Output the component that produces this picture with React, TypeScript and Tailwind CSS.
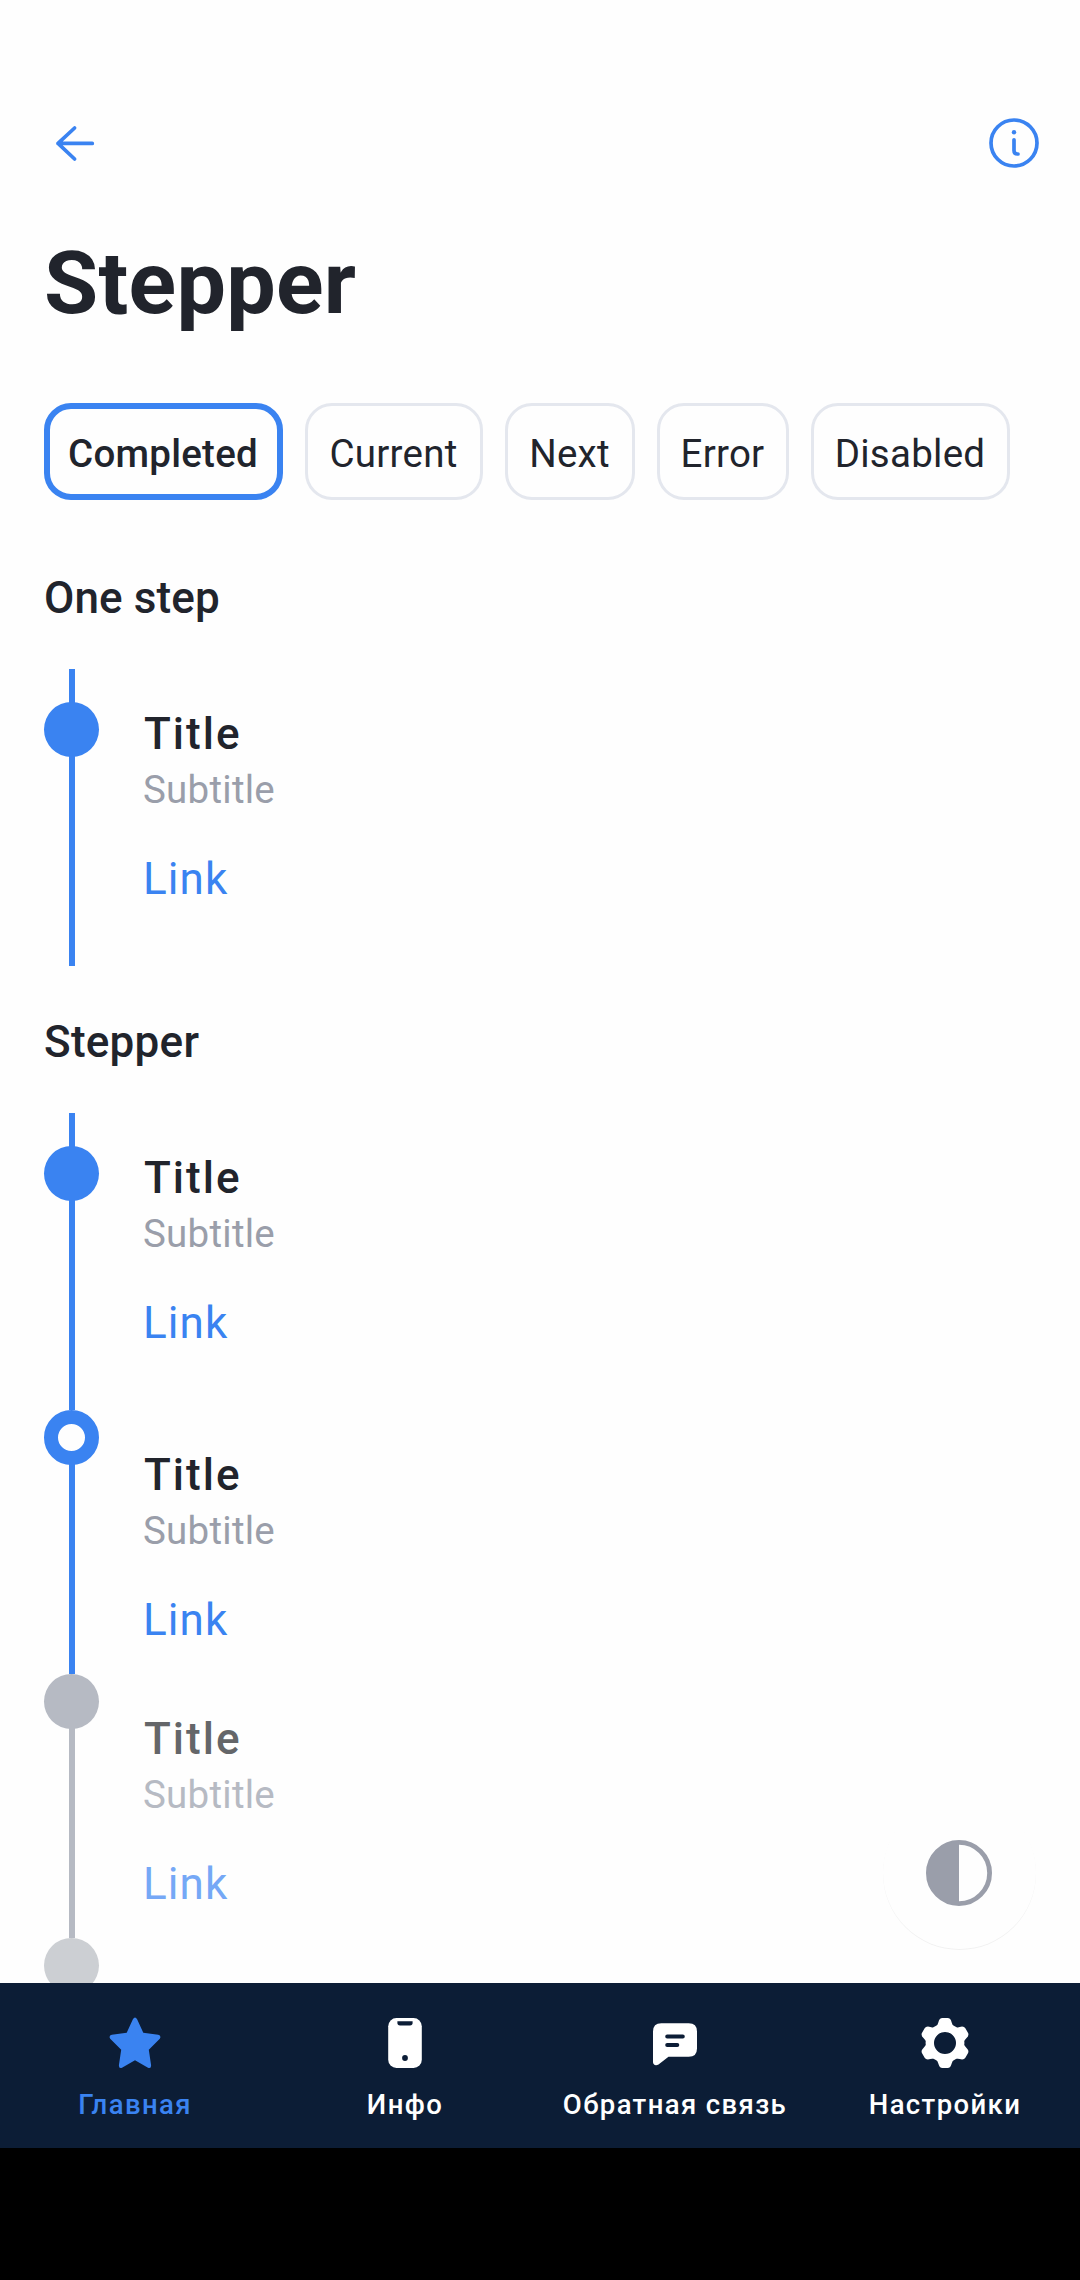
import React from "react";

type Tone = "done" | "current" | "next" | "disabled";

const chips = [
  { label: "Completed", cls: "w-[239px] border-[6px] border-[#3a83f1] pr-px font-medium" },
  { label: "Current", cls: "w-[178px] border-[3px] border-[#e4e7ee] pr-px" },
  { label: "Next", cls: "w-[130px] border-[3px] border-[#e4e7ee] pr-px" },
  { label: "Error", cls: "w-[132px] border-[3px] border-[#e4e7ee] pr-px" },
  { label: "Disabled", cls: "w-[199px] border-[3px] border-[#e4e7ee] pr-px" },
];

const dotTone: Record<Tone, string> = {
  done: "bg-[#3a83f1]",
  current: "border-[14px] border-[#3a83f1] bg-[#fefefe]",
  next: "bg-[#b6bac3]",
  disabled: "bg-[#cccfd3]",
};

const lineTone: Record<Tone, string> = {
  done: "bg-[#3a83f1]",
  current: "bg-[#3a83f1]",
  next: "bg-[#b6bac3]",
  disabled: "bg-[#cccfd3]",
};

function Step({ tone, first = false }: { tone: Tone; first?: boolean }) {
  const dim = tone === "next" || tone === "disabled";
  return (
    <div className={`flex shrink-0 gap-11 ${first ? "h-[297px]" : "h-[264px]"}`}>
      <div className="flex w-[55px] flex-col items-start">
        {first && <div className={`-mb-px ml-[25px] h-[34px] w-[6px] ${lineTone[tone]}`} />}
        <div className={`size-[55px] shrink-0 rounded-full ${dotTone[tone]}`} />
        <div className={`-mt-px ml-[25px] w-[6px] flex-1 ${lineTone[tone]}`} />
      </div>
      <div className="pt-[39px]">
        <p className={`ml-px text-[44px] leading-[52px] font-medium tracking-[2px] ${dim ? "text-[#646669]" : "text-[#21242c]"}`}>Title</p>
        <p className={`mt-[7px] text-[38.5px] leading-[45px] tracking-[0.25px] ${dim ? "text-[#b6bac3]" : "text-[#9a9eaa]"}`}>Subtitle</p>
        <a className={`mt-[41px] block text-[44px] leading-[52px] tracking-[1.1px] ${dim ? "text-[#75a8f6]" : "text-[#3a83f1]"}`}>Link</a>
      </div>
    </div>
  );
}

function StarIcon() {
  return (
    <svg viewBox="0 0 66 66" className="size-[66px]" fill="currentColor">
      <path d="M30.9 9.2Q33 6 35.1 9.2L41.3 22.8L56.2 24.8Q59.6 25.8 57.8 28.8L46.8 39.7L49.1 55.2Q49.2 58.9 46 57.7L33 50.2L20 57.7Q16.8 58.9 16.9 55.2L19.2 39.7L8.2 28.8Q6.4 25.8 9.8 24.8L24.7 22.8Z" />
    </svg>
  );
}

function PhoneIcon() {
  return (
    <svg viewBox="0 0 66 66" className="size-[66px]">
      <rect x="16.2" y="8" width="33.6" height="50" rx="8.3" fill="#fff" />
      <path d="M25.4 11.3H40.6V13Q40.6 15.4 38 15.4H28Q25.4 15.4 25.4 13Z" fill="#0c1d36" />
      <circle cx="33" cy="48" r="2.9" fill="#0c1d36" />
    </svg>
  );
}

function ChatIcon() {
  return (
    <svg viewBox="0 0 66 66" className="size-[66px]">
      <path d="M19.3 13.3H46.7Q55 13.3 55 21.6V38.4Q55 46.7 46.7 46.7H26.5L16.5 54.4Q13.5 56.2 11.6 54Q11 53.2 11 52V21.6Q11 13.3 19.3 13.3Z" fill="#fff" />
      <path d="M25.2 26.5H40.8M25.2 35H35.3" stroke="#0c1d36" strokeWidth="4" strokeLinecap="round" />
    </svg>
  );
}

const teeth = [0, 60, 120, 180, 240, 300];

function GearIcon() {
  return (
    <svg viewBox="0 0 66 66" className="size-[66px]" fill="#fff">
      <circle cx="33" cy="33" r="15.2" fill="none" stroke="#fff" strokeWidth="8.4" />
      {teeth.map((angle) => (
        <path
          key={angle}
          transform={`rotate(${angle} 33 33)`}
          d="M23.6 17.3Q25.4 16 26.4 12.2Q27.4 8 30.4 8H35.6Q38.6 8 39.6 12.2Q40.6 16 42.4 17.3L38.5 21.5H27.5Z"
        />
      ))}
    </svg>
  );
}

const tabs = [
  { label: "Главная", icon: <StarIcon />, active: true },
  { label: "Инфо", icon: <PhoneIcon />, active: false },
  { label: "Обратная связь", icon: <ChatIcon />, active: false },
  { label: "Настройки", icon: <GearIcon />, active: false },
];

export default function App() {
  return (
    <div className="flex h-[2280px] w-[1080px] flex-col overflow-hidden bg-[#fefefe] font-[Roboto,sans-serif] text-[#21242c]">
      <main className="relative flex h-[1983px] shrink-0 flex-col overflow-hidden px-11">
        <header className="-mx-11 flex h-[231px] shrink-0 items-start justify-between pt-[110px] pr-[33px] pl-[42px]">
          <svg viewBox="0 0 66 66" className="size-[66px] text-[#3a83f1]" fill="none" stroke="currentColor" strokeWidth="3.7" strokeLinecap="round" strokeLinejoin="round">
            <path d="M50.3 33.4H16L32.6 18M16 33.4L32.6 49" />
          </svg>
          <svg viewBox="0 0 66 66" className="size-[66px] text-[#3a83f1]" fill="none" stroke="currentColor" strokeWidth="3.7" strokeLinecap="round" strokeLinejoin="round">
            <circle cx="33" cy="33" r="23" />
            <path d="M33 29.8V40.6Q33 44 36.4 44H37" />
            <circle cx="33" cy="22.2" r="2.2" fill="currentColor" stroke="none" />
          </svg>
        </header>
        <h1 className="text-[88px] leading-[103px] font-bold tracking-[0.3px]">Stepper</h1>
        <div className="mt-[69px] flex h-[97px] shrink-0 gap-[22px]">
          {chips.map((chip) => (
            <button key={chip.label} className={`flex shrink-0 items-center justify-center rounded-[27px] pt-[3px] text-[38.5px] leading-[45px] tracking-[0.25px] ${chip.cls}`}>
              {chip.label}
            </button>
          ))}
        </div>
        <h2 className="mt-[72px] text-[44px] leading-[52px] font-medium tracking-[0.1px]">One step</h2>
        <section className="mt-[45px] flex flex-col">
          <Step tone="done" first />
        </section>
        <h2 className="mt-[50px] text-[44px] leading-[52px] font-medium tracking-[0.25px]">Stepper</h2>
        <section className="mt-[45px] flex flex-col">
          <Step tone="done" first />
          <Step tone="current" />
          <Step tone="next" />
          <div className="flex h-[45px] overflow-hidden">
            <div className={`size-[55px] shrink-0 rounded-full ${dotTone.disabled}`} />
          </div>
        </section>
        <button className="absolute right-[44px] bottom-[34px] flex size-[153px] items-center justify-center rounded-full bg-[#fefefe] pr-px shadow-[0_1px_0_rgba(0,0,0,0.05)]">
          <svg viewBox="0 0 66 66" className="size-[66px]">
            <circle cx="33" cy="33" r="30.6" fill="none" stroke="#9a9eaa" strokeWidth="4.8" />
            <path d="M33 1A32 32 0 0 0 33 65Z" fill="#9a9eaa" />
          </svg>
        </button>
      </main>
      <nav className="grid h-[165px] shrink-0 grid-cols-4 bg-[#0c1d36]">
        {tabs.map((tab) => (
          <a key={tab.label} className={`flex flex-col items-center pt-[27px] ${tab.active ? "text-[#3a83f1]" : "text-white"}`}>
            {tab.icon}
            <span className="mt-[13px] text-[27.5px] leading-[32px] font-medium tracking-[1.38px] whitespace-nowrap">{tab.label}</span>
          </a>
        ))}
      </nav>
      <div className="flex-1 bg-black" />
    </div>
  );
}
